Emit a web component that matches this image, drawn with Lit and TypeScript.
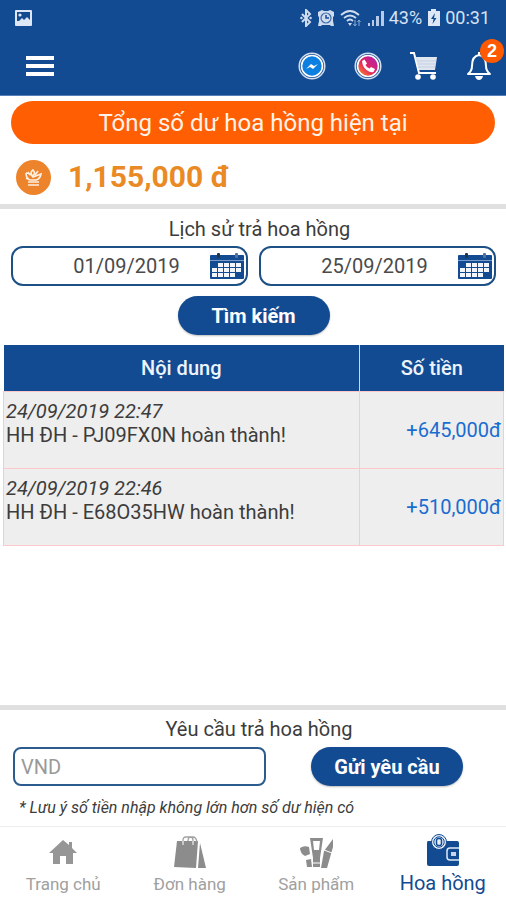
import { LitElement, html, css, svg } from "lit";
import { customElement } from "lit/decorators.js";

const statusIcons = {
  picture: svg`<rect x="1" y="1" width="17" height="16" rx="1" fill="#dde7f5"/><path d="M3 3h13v8l-3-3-3 3-2-2-3 3-2 0z" fill="#134b92"/><circle cx="6" cy="6" r="1.6" fill="#dde7f5"/>`,
  bluetooth: svg`<path d="M2 5l8 8-4 4V1l4 4-8 8" fill="none" stroke="#cfdcf0" stroke-width="2"/><circle cx="1.4" cy="9" r="1.2" fill="#cfdcf0"/><circle cx="10.6" cy="9" r="1.2" fill="#cfdcf0"/>`,
  alarm: svg`<path d="M1 3l4-2 2 1h4l2-1 4 2v4l-1 1v4l1 5h-3l-1-1H5l-1 1H1l1-5V8L1 7z" fill="#cfdcf0"/><circle cx="9" cy="9" r="5" fill="none" stroke="#3f6cac" stroke-width="1.2"/><path d="M9 6v3h3" fill="none" stroke="#134b92" stroke-width="1.5"/>`,
  wifi: svg`<g fill="none" stroke="#cfdcf0" stroke-width="1.8"><path d="M1 6q9-8 18 0"/><path d="M4 9q6-5 12 0"/><path d="M7 12q3-3 6 0"/></g><path d="M8 14h4l-2 3z" fill="#cfdcf0"/><path d="M15 11v6m-1.500-2l1.500 2 1.500-2M19 17v-6m-1.500 2l1.500-2 1.500 2" fill="none" stroke="#8fabd6"/>`,
  signal: svg`<path d="M1 14h2v3H1zM5 11h2v6H5zM9 7h3v10H9zM14 2h3v15h-3z" fill="#b7cae7"/>`,
  battery: svg`<path d="M4 0h5v2h4v15H1V2h3z" fill="#dde7f5"/><path d="M8 4l-4 6h2.500l-1 5 4-6H7z" fill="#134b92"/>`,
};

const calendar = svg`
  <rect y="2" width="34" height="24" rx="1" fill="#134b92"/>
  <rect y="7" width="34" height="1" fill="#7c9bc8"/>
  <g fill="#f2f6fc">
    <rect x="8" y="10" width="5" height="4"/><rect x="14" y="10" width="5" height="4"/><rect x="20" y="10" width="5" height="4"/><rect x="26" y="10" width="5" height="4"/>
    <rect x="2" y="15" width="5" height="4"/><rect x="8" y="15" width="5" height="4"/><rect x="14" y="15" width="5" height="4"/><rect x="20" y="15" width="5" height="4"/><rect x="26" y="15" width="5" height="4"/>
    <rect x="2" y="20" width="5" height="4"/><rect x="8" y="20" width="5" height="4"/><rect x="14" y="20" width="5" height="4"/><rect x="20" y="20" width="5" height="4"/>
  </g>
  <rect x="7" y="0" width="3" height="5" rx="1" fill="#24344f"/><rect x="25" y="0" width="3" height="5" rx="1" fill="#52719f"/>`;

const navItems = [
  {
    label: "Trang chủ",
    active: false,
    icon: svg`<path d="M18 5L4 18h4v11h7v-8h6v8h7V18h4l-5-5V7h-3v3z" fill="#969696"/>`,
  },
  {
    label: "Đơn hàng",
    active: false,
    icon: svg`<path d="M5 6h21l-2 27-22-1z" fill="#8c8c8c"/><path d="M28 8l6 25h-8z" fill="#8c8c8c"/><path d="M11 8V5q0-3 3-3h4q3 0 3 3v3M16 6q0-4 3-4h2q3 0 4 5" fill="none" stroke="#a2a2a2" stroke-width="1.3"/><path d="M11 6v4M21 6v4" stroke="#fff"/>`,
  },
  {
    label: "Sản phẩm",
    active: false,
    icon: svg`<path d="M12 3h13l-3 20v9h-7v-9z" fill="#8c8c8c"/><path d="M15 6h7l-1 9h-5z" fill="#fff"/><path d="M35 4v8l-6 21h-6l3-17z" fill="#8c8c8c"/><path d="M2 13q4-3 9-1l1 7-5 2q-5-3-5-8z" fill="#8c8c8c"/><path d="M8 25l5-1 1 8H9z" fill="#8c8c8c"/><path d="M15 28h7M26 15l8 3" stroke="#fff"/>`,
  },
  {
    label: "Hoa hồng",
    active: true,
    icon: svg`<path d="M3 7h29q2 0 2 2v21q0 2-2 2H4q-2 0-2-2V9q0-2 1-2z" fill="#134b92"/><path d="M34 14H25q-3 0-3 3v6q0 3 3 3h9" fill="#134b92" stroke="#dfe9f7" stroke-width="1.5"/><rect x="26" y="18" width="5" height="4" fill="#c7d6ec"/><circle cx="14" cy="8" r="7.500" fill="#e6eefa" stroke="#134b92"/><circle cx="14" cy="8" r="5.200" fill="none" stroke="#134b92"/><rect x="11.500" y="4.500" width="5" height="7" rx="2" fill="none" stroke="#134b92" stroke-width="1.500"/>`,
  },
];

const rows = [
  { time: "24/09/2019 22:47", text: "HH ĐH - PJ09FX0N hoàn thành!", amount: "+645,000đ" },
  { time: "24/09/2019 22:46", text: "HH ĐH - E68O35HW hoàn thành!", amount: "+510,000đ" },
];

@customElement("app-root")
export class AppRoot extends LitElement {
  static styles = css`
    :host {
      display: flex;
      flex-direction: column;
      min-height: 100vh;
      background: #fff;
      color: #3c3c3c;
      font-family: Roboto, "Noto Sans", sans-serif;
      font-size: 20px;
      line-height: 24px;
    }
    * { box-sizing: border-box; }
    svg { display: block; flex: none; }
    button, input { font: inherit; margin: 0; }
    button { border: 0; padding: 0; background: none; cursor: pointer; }
    h2 { margin: 0; padding-left: 12px; font-size: 20px; font-weight: 400; text-align: center; }

    .top { background: #134b92; color: #d7e2f3; border-bottom: 1px solid #5580bb; }
    .status { display: flex; align-items: center; height: 36px; padding: 0 16px 0 14px; font-size: 18px; }
    .status .picture { margin-right: auto; }
    .status-set { display: flex; align-items: center; gap: 5px; }
    .bar { display: flex; align-items: center; height: 59px; padding: 0 14px 0 26px; }
    .menu { margin-right: auto; }
    .actions { display: flex; align-items: center; gap: 28px; }
    .bell { position: relative; }
    .badge {
      position: absolute; top: -13px; right: -12px;
      width: 24px; height: 24px; border-radius: 50%;
      background: #ff5a00; color: #fff;
      font-family: "Liberation Sans", sans-serif;
      font-size: 18px; font-weight: 700; text-align: center;
    }

    .balance { padding: 5px 11px 9px; border-bottom: 5px solid #e0e0e0; }
    .balance h1 {
      margin: 0; padding: 8px 0 7px; border-radius: 22px;
      background: #ff5f02; color: #fff3e9;
      font-size: 24px; line-height: 28px; font-weight: 400; text-align: center;
    }
    .total {
      display: flex; align-items: center; gap: 17px;
      padding: 15px 5px 0; color: #ea8a25;
      font-size: 30px; line-height: 36px; font-weight: 700;
    }

    .history { flex: 1; padding: 8px 2px 0 3px; }
    .dates { display: flex; gap: 11px; padding: 5px 8px 10px; }
    .field { position: relative; flex: 1; }
    .field input {
      width: 100%; height: 40px; padding: 0 6px 0 0;
      border: 2px solid #1d5085; border-radius: 12px;
      background: #fff; color: #4a4a4a; text-align: center;
    }
    .pick { position: absolute; top: 7px; right: 4px; }
    .pill {
      display: block; width: 152px; height: 39px; border-radius: 20px;
      background: #134b92; color: #fff; font-weight: 700;
      box-shadow: 0 1px 2px #0004;
    }
    .search { margin: 0 auto 10px; }

    table { width: 100%; border-collapse: collapse; table-layout: fixed; }
    th { height: 46px; background: #134b92; color: #edf3fb; font-weight: 500; padding: 0; }
    th + th { width: 144px; border-left: 1px solid #f3c9d2; }
    td { height: 77px; padding: 0 2px; background: #eee; border: 1px solid #fcc8cb; }
    td:first-child { vertical-align: top; padding-top: 7px; }
    td p { margin: 0; }
    .time { font-style: italic; }
    .amount { color: #1a6dd0; text-align: right; }

    .request { border-top: 5px solid #e0e0e0; padding: 7px 13px 6px; }
    .send { display: flex; align-items: center; gap: 45px; padding: 6px 30px 10px 0; }
    .send input {
      flex: 1; min-width: 0; height: 39px; padding: 0 6px;
      border: 2px solid #2c5c8e; border-radius: 8px; background: #fff; color: #3c3c3c;
    }
    .send input::placeholder { color: #999; opacity: 1; }
    .note { margin: 0; padding-left: 6px; font-size: 16px; font-style: italic; }

    nav { display: grid; grid-template-columns: repeat(4, 1fr); height: 74px; border-top: 1px solid #eee; }
    nav a {
      display: flex; flex-direction: column; align-items: center; gap: 1px;
      padding-top: 8px; color: #a0a0a0; font-size: 17px; text-decoration: none;
    }
    nav a.active { color: #134b92; font-size: 20px; padding-top: 7px; }
  `;

  render() {
    return html`
      <header class="top">
        <div class="status">
          <svg class="picture" width="19" height="18">${statusIcons.picture}</svg>
          <div class="status-set">
            <svg width="12" height="18">${statusIcons.bluetooth}</svg>
            <svg width="18" height="18">${statusIcons.alarm}</svg>
            <svg width="22" height="18">${statusIcons.wifi}</svg>
            <svg width="17" height="18">${statusIcons.signal}</svg>
            <span>43%</span>
            <svg width="13" height="18">${statusIcons.battery}</svg>
            <span>00:31</span>
          </div>
        </div>
        <div class="bar">
          <button class="menu" aria-label="Menu">
            <svg width="28" height="20"><path d="M0 0h28v4H0zM0 8h28v4H0zM0 16h28v4H0z" fill="#fff"/></svg>
          </button>
          <div class="actions">
            <button aria-label="Messenger">
              <svg width="28" height="28"><circle cx="14" cy="14" r="12.800" fill="#134b92" stroke="#d3dff0" stroke-width="1.500"/><circle cx="14" cy="14" r="10.500" fill="#0d7fe0" stroke="#fff" stroke-width="1.600"/><path d="M8 17l5-5 3 2 4-2-5 5-3-2z" fill="#fff"/></svg>
            </button>
            <button aria-label="Điện thoại">
              <svg width="28" height="28"><defs><linearGradient id="call" x1="0" y1="1" x2="1" y2="0"><stop offset="0" stop-color="#ff9a1f"/><stop offset="0.450" stop-color="#e3245f"/><stop offset="1" stop-color="#a61fc0"/></linearGradient></defs><circle cx="14" cy="14" r="12.800" fill="#134b92" stroke="#d3dff0" stroke-width="1.500"/><circle cx="14" cy="14" r="10.500" fill="url(#call)" stroke="#fff" stroke-width="1.600"/><path d="M8 9l2.500-1.500 2.500 4-1.500 1.500q1 2.500 4 3.500l1.500-1.500 4 2-1.500 3q-3 1-7-2t-4.500-9z" fill="#fff"/></svg>
            </button>
            <button aria-label="Giỏ hàng">
              <svg width="28" height="28"><path d="M0 1h4l5 20h17" fill="none" stroke="#fff" stroke-width="2"/><path d="M5 5h22l-2 13H9z" fill="#dfe6f0"/><path d="M7 9h19M8 12h18M8 15h17" stroke="#c3cfe1"/><circle cx="8" cy="25" r="2.800" fill="#fff"/><circle cx="23" cy="25" r="2.800" fill="#fff"/></svg>
            </button>
            <button class="bell" aria-label="Thông báo, 2">
              <svg width="26" height="28"><path d="M2 22q4-3 4-8 0-10 7-11 7 1 7 11 0 5 4 8z" fill="none" stroke="#fff" stroke-width="2" stroke-linejoin="round"/><path d="M9 24h8q-1 4-4 4t-4-4z" fill="#fff"/><path d="M13 0v3" stroke="#fff" stroke-width="2"/></svg>
              <span class="badge">2</span>
            </button>
          </div>
        </div>
      </header>

      <section class="balance">
        <h1>Tổng số dư hoa hồng hiện tại</h1>
        <div class="total">
          <svg width="35" height="35"><circle cx="17.500" cy="17.500" r="17.500" fill="#ed832b"/><g fill="none" stroke="#fff0df" stroke-width="1.600"><path d="M10 13q4 0 7 4l8-3q-1 5-5 6h-6q-4-2-4-7M12 22h11M12 25h11M14 15l-2-3M17 16q-4-3 0-6 3 3 0 6M19 15l3-4M10 18l4 2"/></g></svg>
          <span>1,155,000 đ</span>
        </div>
      </section>

      <section class="history">
        <h2>Lịch sử trả hoa hồng</h2>
        <div class="dates">
          ${[["Từ ngày", "01/09/2019"], ["Đến ngày", "25/09/2019"]].map(
            ([label, value]) => html`
              <div class="field">
                <input type="text" aria-label=${label} .value=${value} />
                <button class="pick" aria-label=${label}><svg width="34" height="26">${calendar}</svg></button>
              </div>`
          )}
        </div>
        <button class="pill search">Tìm kiếm</button>
        <table>
          <thead><tr><th scope="col">Nội dung</th><th scope="col">Số tiền</th></tr></thead>
          <tbody>
            ${rows.map((r) => html`
              <tr>
                <td><p class="time">${r.time}</p><p>${r.text}</p></td>
                <td class="amount">${r.amount}</td>
              </tr>`)}
          </tbody>
        </table>
      </section>

      <section class="request">
        <h2>Yêu cầu trả hoa hồng</h2>
        <div class="send">
          <input type="text" inputmode="numeric" placeholder="VND" aria-label="Số tiền (VND)" />
          <button class="pill">Gửi yêu cầu</button>
        </div>
        <p class="note">* Lưu ý số tiền nhập không lớn hơn số dư hiện có</p>
      </section>

      <nav>
        ${navItems.map((n) => html`
          <a href="#" class=${n.active ? "active" : ""}><svg width="36" height="36">${n.icon}</svg>${n.label}</a>`)}
      </nav>
    `;
  }
}
